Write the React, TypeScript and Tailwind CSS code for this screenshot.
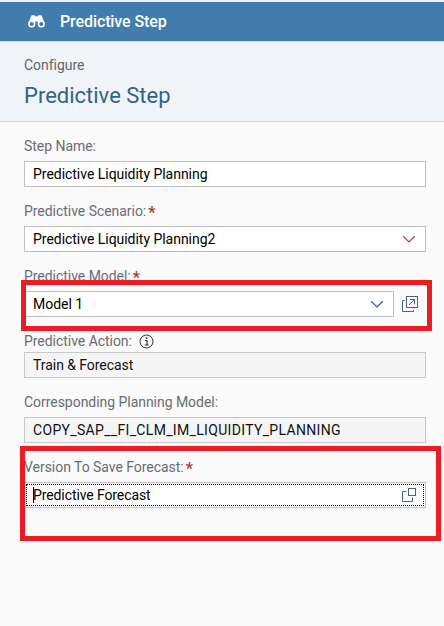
import type { ReactNode } from "react";

function Label({ children, required, className = "" }: { children: ReactNode; required?: boolean; className?: string }) {
  return (
    <div className={`flex h-[20px] items-center whitespace-nowrap text-[14px] leading-[20px] tracking-[-0.04px] text-[#6a6d70] ${className}`}>
      <span>{children}</span>
      {required && <span className="ml-[2px] pt-[3px] text-[16px] font-bold leading-none text-[#b4383f]">*</span>}
    </div>
  );
}

function Chevron({ className }: { className: string }) {
  return (
    <svg className={className} width="14" height="8" viewBox="0 0 14 8" fill="none" stroke="currentColor" strokeWidth="1.2">
      <path d="M1.2 1.3 L7 7 L12.8 1.3" />
    </svg>
  );
}

const field = "flex h-[26px] items-center border bg-white border-[#bfbfbf] pl-2 text-[14px] leading-[24px] tracking-[-0.03px] text-black whitespace-nowrap";
const readOnly = "flex h-[26px] items-center border bg-[#f5f5f5] border-[#c9c9c9] pl-2 text-[14px] leading-[24px] text-[#111] whitespace-nowrap";

export default function App() {
  return (
    <div className="relative h-[626px] w-[444px] overflow-hidden bg-[#fafafa] font-[Roboto,sans-serif]">
      <header className="flex h-[42px] items-center border-b border-t-2 border-b-[#c5d3df] border-t-[#edf2f7] bg-[#427cac] pl-[28px] text-white">
        <svg width="17" height="13" viewBox="0 0 17 13" fill="none">
          <path d="M3.2 1 Q3.3 .2 4 .2 H6.3 Q7 .2 7.2 1.2 H9.8 Q10 .2 10.7 .2 H13 Q13.7 .2 13.8 1 L16.6 8 L13 9 L9.7 8.6 V6.6 H7.3 V8.6 L4 9 L.4 8 Z" fill="white" />
          <circle cx="3.7" cy="9" r="2.8" fill="#427cac" stroke="white" strokeWidth="1.5" />
          <circle cx="13.3" cy="9" r="2.8" fill="#427cac" stroke="white" strokeWidth="1.5" />
        </svg>
        <span className="ml-[15px] text-[16px] font-medium leading-[20px] tracking-[-0.1px]">Predictive Step</span>
      </header>
      <section className="h-[80px] border-b border-[#d5dfe8] bg-[#eff4f9] pl-[24px] pt-[13px]">
        <div className="text-[14px] leading-[20px] tracking-[-0.04px] text-[#666]">Configure</div>
        <h1 className="mt-[7px] text-[22px] leading-[28px] text-[#346187]">Predictive Step</h1>
      </section>
      <main className="flex flex-col pl-[24px] pr-[18px] pt-[14px]">
        <Label>Step Name:</Label>
        <div className={`mt-[5px] ${field}`}>Predictive Liquidity Planning</div>

        <Label required className="mt-[14px]">Predictive Scenario:</Label>
        <div className={`mt-[5px] justify-between pr-[9px] ${field}`}>
          <span>Predictive Liquidity Planning2</span>
          <Chevron className="text-[#a04368]" />
        </div>

        <Label required className="mt-[14px]">Predictive Model:</Label>
        <div className="mt-[5px] flex items-center">
          <div className={`w-[370px] justify-between pr-[9px] ${field}`}>
            <span>Model 1</span>
            <Chevron className="text-[#346187]" />
          </div>
          <svg className="ml-[8px]" width="17" height="17" viewBox="0 0 17 17" fill="none" stroke="#4c5f91">
            <rect x="4.5" y=".5" width="11" height="11" />
            <path d="M2.5 4.5 H.5 V15.5 H11.5 V14 M7 9 L12.5 3.5 M8 3.5 H12.5 V8" />
          </svg>
        </div>

        <Label className="mt-[14px]">
          Predictive Action:
          <svg className="ml-[7px] inline-block align-[-3px]" width="15" height="15" viewBox="0 0 15 15" fill="none" stroke="#333">
            <circle cx="7.5" cy="7.5" r="6.5" />
            <path d="M6 6.5 H8 V11 M5.8 11 H9.5" strokeWidth="1.2" />
            <path d="M6.8 4.2 H8.4" strokeWidth="1.6" />
          </svg>
        </Label>
        <div className={`mt-[1px] tracking-[-0.05px] ${readOnly}`}>Train &amp; Forecast</div>

        <Label className="mt-[14px]">Corresponding Planning Model:</Label>
        <div className={`mt-[5px] tracking-[0.33px] ${readOnly}`}>COPY_SAP__FI_CLM_IM_LIQUIDITY_PLANNING</div>

        <Label required className="mt-[14px]">Version To Save Forecast:</Label>
        <div className="mt-[5px] h-[26px] border border-[#bfbfbf] bg-white p-px">
          <div className="flex h-[22px] items-center justify-between border border-dotted border-black pl-[6px] pr-[6px] text-[14px] tracking-[-0.1px] text-black">
            <span className="flex items-center">
              <i className="-mr-px h-[16px] w-px bg-black" />
              Predictive Forecast
            </span>
            <svg width="15" height="15" viewBox="0 0 15 15" fill="none" stroke="#4c5f91">
              <rect x="6.5" y=".5" width="7" height="7" />
              <path d="M4.5 3.5 H.5 V13.5 H10.5 V9.5" />
            </svg>
          </div>
        </div>
      </main>
      <div className="absolute left-[21px] top-[280px] h-[51px] w-[411px] border-[5px] border-[#ed1c24]" />
      <div className="absolute left-[20px] top-[446px] h-[95px] w-[421px] border-[5px] border-[#ed1c24]" />
    </div>
  );
}
